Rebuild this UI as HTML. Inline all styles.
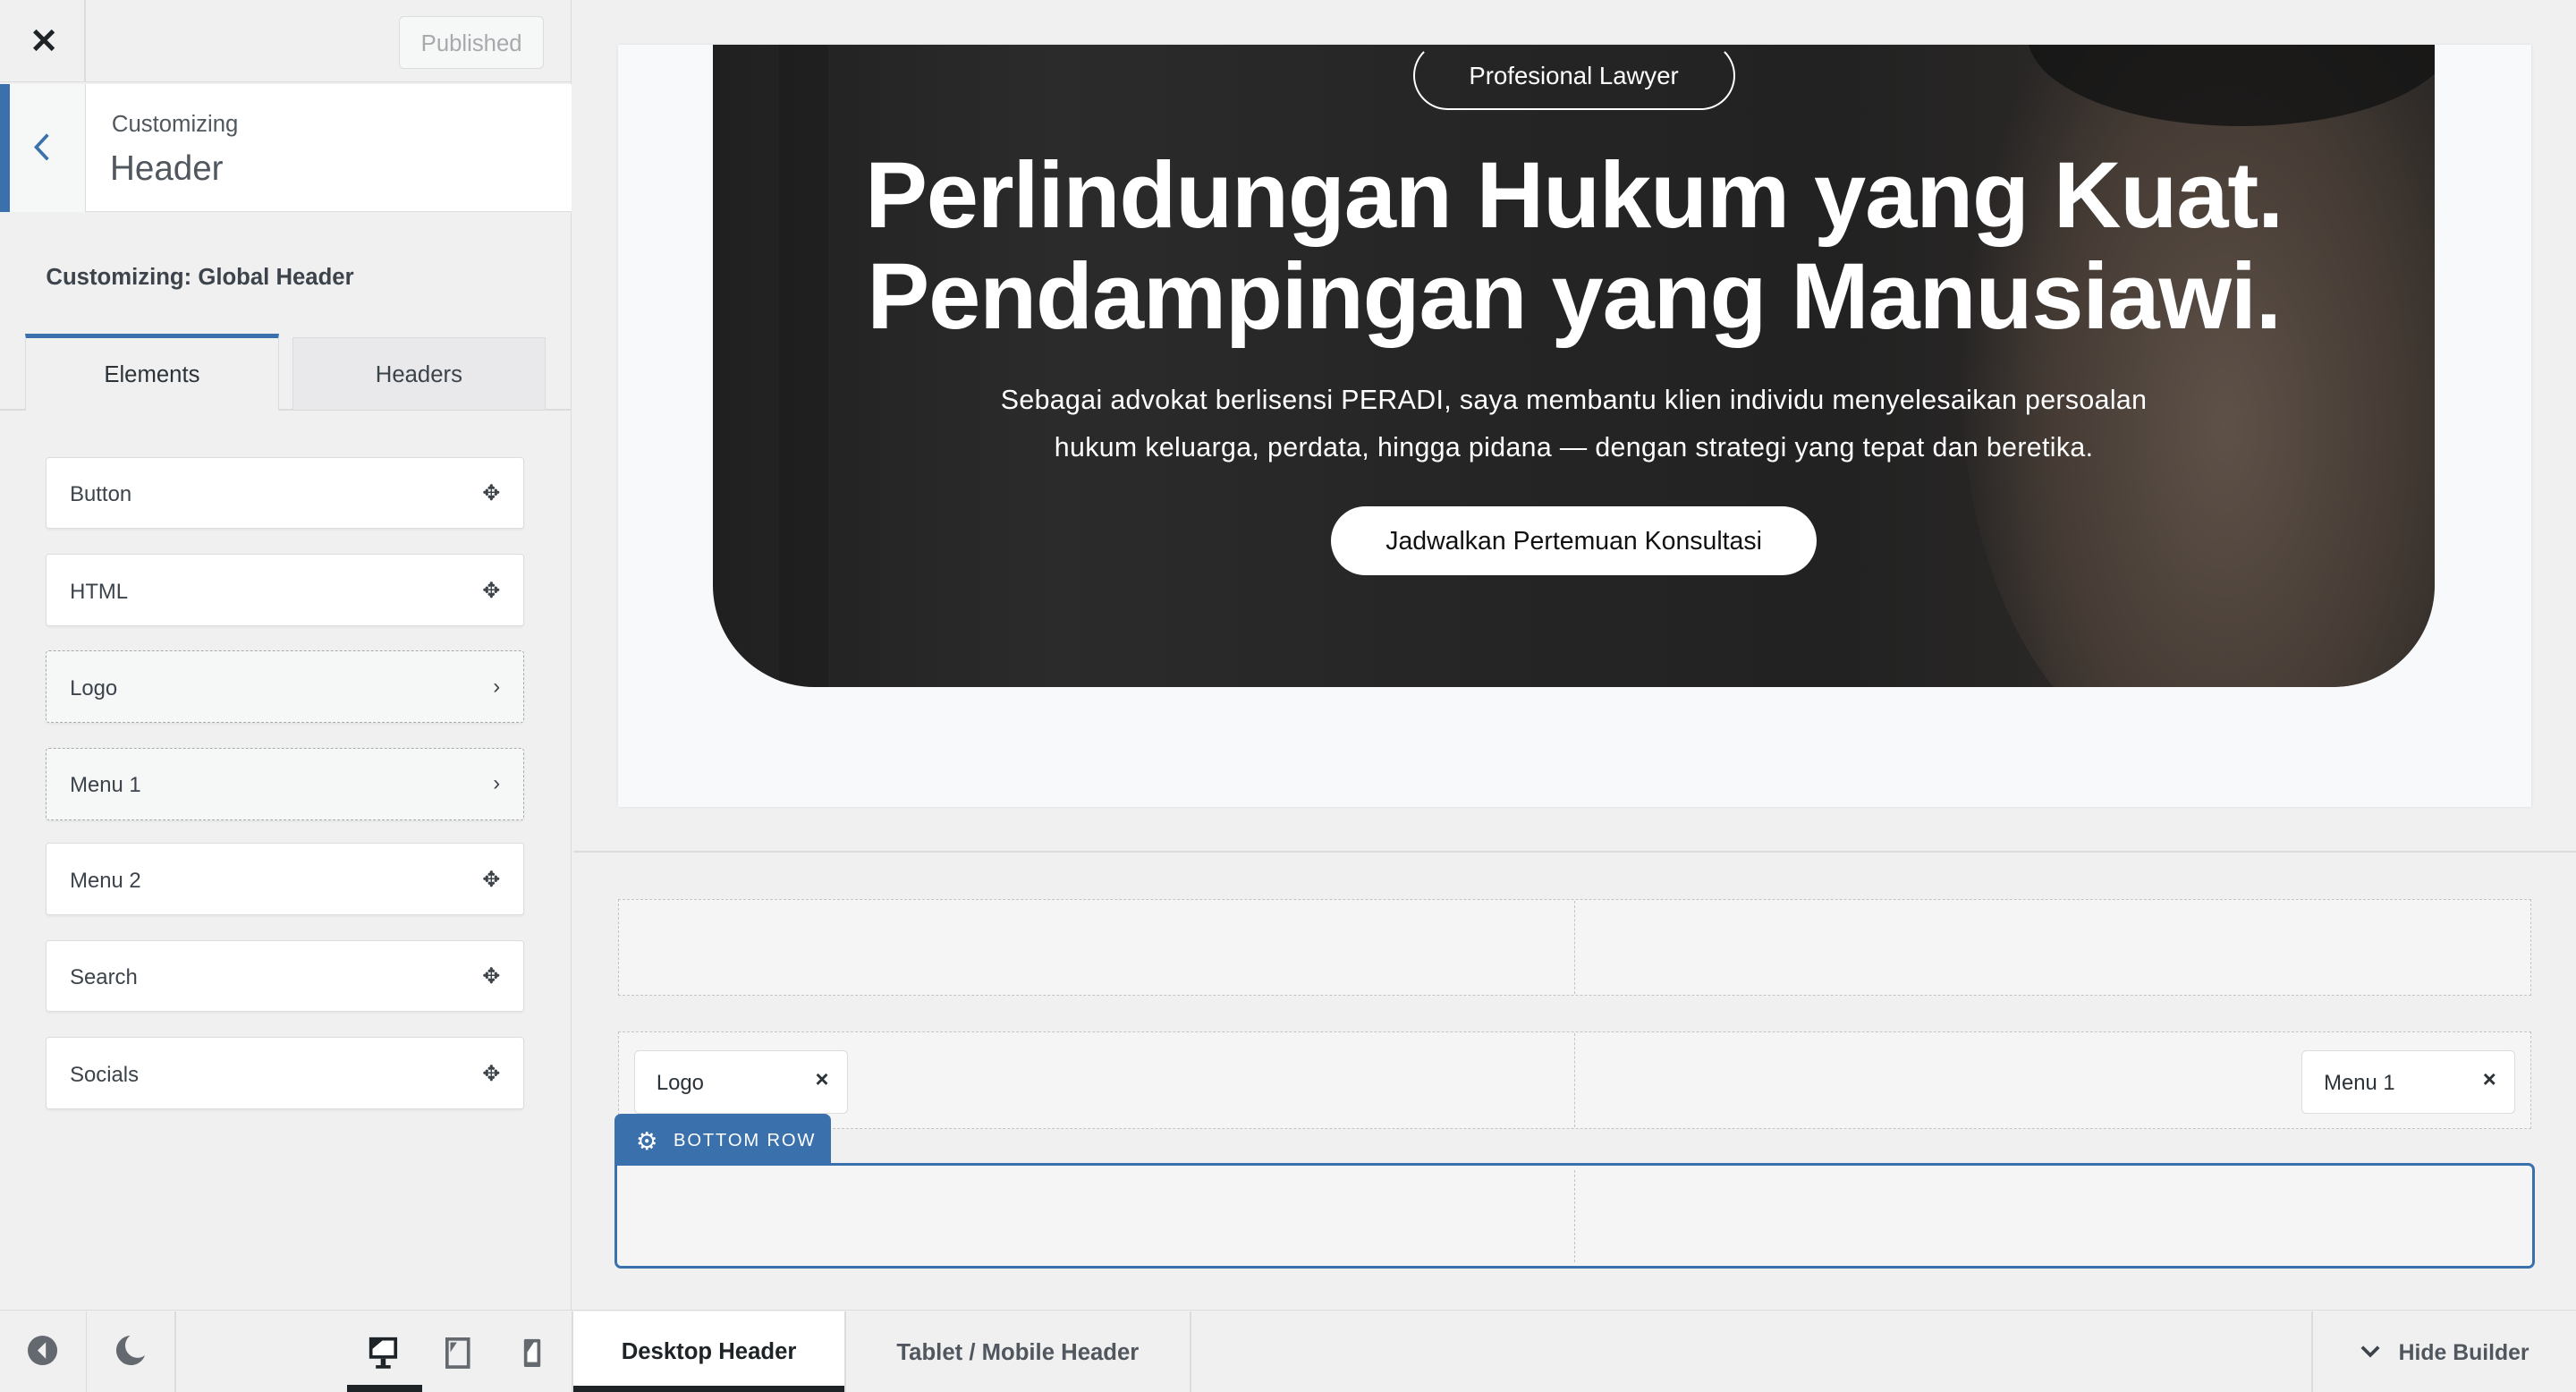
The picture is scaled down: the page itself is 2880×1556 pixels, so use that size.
<!DOCTYPE html>
<html><head><meta charset="utf-8">
<style>
*{box-sizing:border-box;margin:0;padding:0}
html,body{width:2880px;height:1556px;overflow:hidden;background:#f0f0f1}
#r{zoom:1.83673;width:1568px;height:847px;position:relative;font-family:"Liberation Sans",sans-serif;color:#1d2327;background:#f0f0f1}
.a{position:absolute}
.item{position:absolute;left:28px;width:291px;height:44px;background:#fff;border:1px solid #dcdcde;border-radius:2px;font-size:13px;color:#3c434a;padding:15px 14px;box-shadow:0 1px 1px rgba(0,0,0,.04)}
.item.d{background:#f6f7f7;border:1px dashed #a7aaad}
.item .ic{position:absolute;right:14px;top:14px;font-size:13px;color:#3c434a}
.zone{position:absolute;border:1px dashed #c3c4c7;background:#f5f5f5}
.chip{position:absolute;background:#fff;border:1px solid #dcdcde;border-radius:3px;font-size:13px;color:#2c3338;padding:12px 13px;height:39px}
.chip b{position:absolute;right:11px;top:10px;font-weight:bold;font-size:14px}
</style></head><body><div id="r">
<div class="a" style="left:0;top:0;width:348px;height:797px;background:#f0f0f1;border-right:1px solid #dcdcde"></div>
<div class="a" style="left:0;top:0;width:348px;height:50px;border-bottom:1px solid #dcdcde"></div>
<div class="a" style="left:51px;top:0;width:1px;height:50px;background:#dcdcde"></div>
<div class="a" style="left:18px;top:13px;font-size:21px;font-weight:bold;color:#1d2327">✕</div>
<div class="a" style="left:243px;top:10px;width:88px;height:32px;border:1px solid #dcdcde;border-radius:3px;background:#f6f7f7;color:#a7aaad;font-size:14px;text-align:center;line-height:33px">Published</div>
<div class="a" style="left:0;top:51px;width:348px;height:78px;background:#fff;border-bottom:1px solid #dcdcde"></div>
<div class="a" style="left:0;top:51px;width:52px;height:78px;background:#f6f7f7;border-right:1px solid #dcdcde;border-left:6px solid #3a71ac"></div>
<svg class="a" style="left:19px;top:80px" width="14" height="20"><path d="M10 2 L3 9.5 L10 17" stroke="#3a71ac" stroke-width="2" fill="none"/></svg>
<div class="a" style="left:68px;top:68px;font-size:14px;color:#50575e">Customizing</div>
<div class="a" style="left:67px;top:91px;font-size:21px;color:#50575e">Header</div>
<div class="a" style="left:28px;top:161px;font-size:14px;font-weight:bold;color:#3c434a">Customizing: Global Header</div>
<div class="a" style="left:0;top:249px;width:348px;height:1px;background:#dcdcde"></div>
<div class="a" style="left:15px;top:203px;width:155px;height:47px;background:#f0f0f1;border:1px solid #dcdcde;border-top:3px solid #3a71ac;border-bottom:none;text-align:center;font-size:14px;line-height:45px;color:#2c3338">Elements</div>
<div class="a" style="left:178px;top:205px;width:154px;height:45px;background:#e9e9eb;border:1px solid #dcdcde;text-align:center;font-size:14px;line-height:45px;color:#3c434a">Headers</div>
<div class="item" style="top:278px">Button<span class="ic">✥</span></div>
<div class="item" style="top:337px">HTML<span class="ic">✥</span></div>
<div class="item d" style="top:396px">Logo<span class="ic">›</span></div>
<div class="item d" style="top:455px">Menu 1<span class="ic">›</span></div>
<div class="item" style="top:513px">Menu 2<span class="ic">✥</span></div>
<div class="item" style="top:572px">Search<span class="ic">✥</span></div>
<div class="item" style="top:631px">Socials<span class="ic">✥</span></div>
<div class="a" style="left:376px;top:27px;width:1165px;height:464px;background:#f8f9fb;box-shadow:0 0 2px rgba(0,0,0,.08)"></div>
<div class="a" style="left:434px;top:27px;width:1048px;height:391px;border-radius:0 0 62px 62px;overflow:hidden;background:linear-gradient(90deg,#202020 0%,#2b2b2b 20%,#252525 45%,#222 65%,#2a2726 78%,#2e2a27 100%)">
<div class="a" style="left:760px;top:-80px;width:320px;height:520px;border-radius:45%;background:radial-gradient(ellipse at 50% 60%,#5e5148 0%,#463c35 45%,rgba(40,38,36,0) 72%)"></div>
<div class="a" style="left:800px;top:-60px;width:260px;height:110px;border-radius:50%;background:#151515;opacity:.85"></div>
<div class="a" style="left:40px;top:0;width:30px;height:391px;background:#1c1c1c;opacity:.6"></div>
</div>
<div class="a" style="left:860px;top:25px;width:196px;height:42px;border:1.5px solid #fff;border-radius:22px;border-top:1.5px solid transparent;color:#fff;font-size:15px;text-align:center;line-height:40px">Profesional Lawyer</div>
<div class="a" style="left:434px;top:89px;width:1048px;text-align:center;color:#fff;font-weight:bold;font-size:57px;line-height:61px;letter-spacing:-0.6px;white-space:nowrap">Perlindungan Hukum yang Kuat.<br>Pendampingan yang Manusiawi.</div>
<div class="a" style="left:434px;top:229px;width:1048px;text-align:center;color:#fff;font-size:16.5px;line-height:29px;letter-spacing:0.2px">Sebagai advokat berlisensi PERADI, saya membantu klien individu menyelesaikan persoalan<br>hukum keluarga, perdata, hingga pidana — dengan strategi yang tepat dan beretika.</div>
<div class="a" style="left:810px;top:308px;width:296px;height:42px;background:#fff;border-radius:21px;text-align:center;line-height:43px;font-size:15.5px;color:#111">Jadwalkan Pertemuan Konsultasi</div>
<div class="a" style="left:349px;top:518px;width:1219px;height:1px;background:#dcdcde"></div>
<div class="zone" style="left:376px;top:547px;width:1165px;height:59px"></div>
<div class="a" style="left:958px;top:548px;width:0;height:57px;border-left:1px dashed #c3c4c7"></div>
<div class="zone" style="left:376px;top:628px;width:1165px;height:59px"></div>
<div class="a" style="left:958px;top:629px;width:0;height:57px;border-left:1px dashed #c3c4c7"></div>
<div class="chip" style="left:386px;top:639px;width:130px">Logo<b>×</b></div>
<div class="chip" style="left:1401px;top:639px;width:130px">Menu 1<b>×</b></div>
<div class="a" style="left:374px;top:678px;width:132px;height:32px;background:#3a71ac;border-radius:4px 4px 0 0;color:#fff;font-size:11px;letter-spacing:1px;padding:10px 0 0 36px">BOTTOM ROW</div>
<div class="a" style="left:387px;top:686px;color:#fff;font-size:15px">⚙</div>
<div class="a" style="left:374px;top:708px;width:1169px;height:64px;border:2px solid #3a71ac;border-radius:0 4px 4px 4px;background:#f5f5f5"></div>
<div class="a" style="left:958px;top:712px;width:0;height:56px;border-left:1px dashed #c3c4c7"></div>
<div class="a" style="left:0;top:797px;width:1568px;height:50px;background:#f0f0f1;border-top:1px solid #dcdcde"></div>
<div class="a" style="left:52px;top:798px;width:1px;height:49px;background:#dcdcde"></div>
<div class="a" style="left:106px;top:798px;width:1px;height:49px;background:#dcdcde"></div>
<div class="a" style="left:348px;top:798px;width:1px;height:49px;background:#dcdcde"></div>
<svg class="a" style="left:17px;top:813px" width="20" height="20"><circle cx="9" cy="9" r="9" fill="#646970"/><path d="M11 4 L6 9 L11 14Z" fill="#f0f0f1"/></svg>
<svg class="a" style="left:70px;top:813px" width="20" height="20"><path d="M9 0 A9 9 0 1 0 18 12 A7 7 0 0 1 9 0Z" fill="#646970"/></svg>
<svg class="a" style="left:224px;top:813px" width="20" height="22"><rect x="1" y="1" width="17" height="13" fill="#1d2327"/><rect x="3" y="3" width="13" height="9" fill="#fff"/><path d="M3 3h6l-6 5z" fill="#1d2327"/><rect x="8" y="14" width="3" height="4" fill="#1d2327"/><rect x="5" y="18" width="9" height="2" fill="#1d2327"/></svg>
<svg class="a" style="left:271px;top:814px" width="16" height="20"><rect x="1" y="1" width="13" height="17" fill="none" stroke="#646970" stroke-width="2"/><path d="M3 3h4l-4 6z" fill="#646970"/></svg>
<svg class="a" style="left:318px;top:814px" width="12" height="20"><rect x="1" y="1" width="10" height="17" rx="1" fill="#646970"/><rect x="3" y="3" width="6" height="12" fill="#fff"/><path d="M3 3h4l-4 6z" fill="#646970"/></svg>
<div class="a" style="left:211px;top:843px;width:46px;height:4px;background:#1d2327"></div>
<div class="a" style="left:349px;top:798px;width:165px;height:49px;background:#fff;border-bottom:4px solid #1d2327;text-align:center;line-height:49px;font-size:14px;font-weight:bold;color:#1d2327">Desktop Header</div>
<div class="a" style="left:514px;top:798px;width:1px;height:49px;background:#dcdcde"></div>
<div class="a" style="left:515px;top:798px;width:209px;height:49px;text-align:center;line-height:51px;font-size:14px;font-weight:bold;color:#50575e">Tablet / Mobile Header</div>
<div class="a" style="left:724px;top:798px;width:1px;height:49px;background:#dcdcde"></div>
<div class="a" style="left:1407px;top:798px;width:1px;height:49px;background:#dcdcde"></div>
<svg class="a" style="left:1437px;top:818px" width="12" height="10"><path d="M1 2 L6 7 L11 2" stroke="#3c434a" stroke-width="2" fill="none"/></svg>
<div class="a" style="left:1460px;top:816px;font-size:13.5px;font-weight:bold;color:#50575e">Hide Builder</div>
</div></body></html>
